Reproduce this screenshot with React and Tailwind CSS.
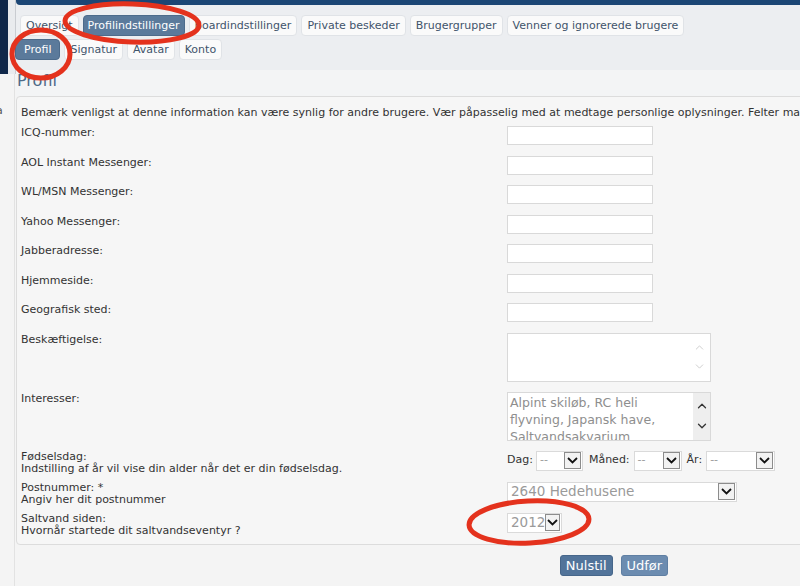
import React from "react";
import { ChevronUp, ChevronDown } from "lucide-react";

const tabs = ["Oversigt", "Profilindstillinger", "Boardindstillinger", "Private beskeder", "Brugergrupper", "Venner og ignorerede brugere"];
const subTabs = ["Profil", "Signatur", "Avatar", "Konto"];
const textRows = ["ICQ-nummer:", "AOL Instant Messenger:", "WL/MSN Messenger:", "Yahoo Messenger:", "Jabberadresse:", "Hjemmeside:", "Geografisk sted:"];

function Tab({ label, active, wide }) {
    return (
        <span
            className={`h-[21px] rounded-[4px] border leading-[19px] whitespace-nowrap ${
                active
                    ? `${wide ? "px-[8px]" : "px-[4px]"} bg-[#5b7a9b] border-[#4d6b8b] text-white`
                    : "px-[5px] bg-[#fafafa] border-[#e0e3e7] text-[#3f546b]"
            }`}
        >
            {label}
        </span>
    );
}

function Chevron() {
    return (
        <span className="w-[17px] h-[17px] mr-[1px] border border-[#8c8c8c] bg-[#f2f2f2] flex items-center justify-center">
            <svg width="11" height="7" viewBox="0 0 11 7">
                <polyline points="1,1 5.5,5.5 10,1" fill="none" stroke="#111" strokeWidth="1.8" />
            </svg>
        </span>
    );
}

function Select({ width, value, big }) {
    return (
        <div className={`${width} h-[20px] bg-white border border-[#dadada] flex items-center justify-between`}>
            <span className={`pl-[3px] text-[#9a9a9a] ${big ? "text-[13.5px]" : "text-[11px]"}`}>{value}</span>
            <Chevron />
        </div>
    );
}

function Row({ label, children, pad = "pb-[10.5px]" }) {
    return (
        <div className={`flex items-start ${pad}`}>
            <div className="w-[486px] shrink-0 leading-[13px]">{label}</div>
            <div>{children}</div>
        </div>
    );
}

// two line label rows (label + hint) are a fixed 31px high
function HintRow({ label, hint, children }) {
    return (
        <div className="flex items-start h-[31px]">
            <div className="w-[486px] shrink-0 leading-[12px]">
                {label}
                <br />
                {hint}
            </div>
            <div>{children}</div>
        </div>
    );
}

export default function App() {
    return (
        <div className="relative w-[800px] h-[586px] overflow-hidden bg-[#f4f4f4] font-['DejaVu_Sans',Verdana,sans-serif] text-[11px] text-[#333]">
            <div className="flex items-start w-[1400px]">
                {/* left edge of the site chrome */}
                <div className="w-[16px] h-[586px] shrink-0 flex flex-col">
                    <div className="flex h-[74px] shrink-0">
                        <div className="w-[8px] bg-[#10284a]" />
                        <div className="w-[7px] bg-[#e9ebee]" />
                        <div className="w-[1px] bg-[#c9ccd1]" />
                    </div>
                    <div className="flex-1 flex">
                        <div className="w-[14px] pt-[30px] text-[#555] overflow-hidden leading-[13px]">
                            <span className="-ml-[4px]">a</span>
                        </div>
                        <div className="w-[1px] bg-[#e2e2e2]" />
                    </div>
                </div>

                <div className="w-[1196px] shrink-0 flex flex-col">
                    <div className="h-[5px] shrink-0 bg-[#1b4675] rounded-bl-[4px]" />
                    <div className="shrink-0 bg-[#eceef1] pt-[10px] pb-[10px] pl-[1px] flex flex-col gap-[3px]">
                        <div className="flex gap-[4px] pl-[3px]">
                            {tabs.map((t) => (
                                <Tab key={t} label={t} active={t === "Profilindstillinger"} />
                            ))}
                        </div>
                        <div className="flex gap-[4px] -ml-[2px]">
                            {subTabs.map((t) => (
                                <Tab key={t} label={t} active={t === "Profil"} wide />
                            ))}
                        </div>
                    </div>
                    <div className="h-[26px] shrink-0 bg-[#f3f4f5] pl-[1px] pt-[2px]">
                        <span className="text-[16px] leading-[18px] text-[#4d6a88]">Profil</span>
                    </div>

                    <div className="shrink-0 border border-[#dcdcdc] rounded-l-[4px] bg-[#f6f6f6] pl-[4px] pt-[9px]">
                        <p className="leading-[13px] mb-[7px] whitespace-nowrap">
                            Bemærk venligst at denne information kan være synlig for andre brugere. Vær påpasselig med at medtage personlige oplysninger. Felter markeret med * skal udfyldes.
                        </p>

                        {textRows.map((l) => (
                            <Row key={l} label={l}>
                                <div className="w-[146px] h-[19px] bg-white border border-[#d9d9d9]" />
                            </Row>
                        ))}

                        <Row label="Beskæftigelse:" pad="pb-[10px]">
                            <div className="w-[204px] h-[49px] bg-white border border-[#d9d9d9] flex justify-end">
                                <div className="w-[16px] flex flex-col items-center justify-center gap-[6px] text-[#c4c4c4] mr-[3px]">
                                    <ChevronUp size={13} strokeWidth={1.5} />
                                    <ChevronDown size={13} strokeWidth={1.5} />
                                </div>
                            </div>
                        </Row>

                        <Row label="Interesser:" pad="pb-[10px]">
                            <div className="w-[204px] h-[49px] bg-white border border-[#d9d9d9] flex overflow-hidden">
                                <div className="flex-1 pl-[2px] pt-[1px] text-[12.5px] leading-[17px] text-[#8e8e8e]">
                                    Alpint skiløb, RC heli flyvning, Japansk have, Saltvandsakvarium
                                </div>
                                <div className="w-[17px] bg-[#eeeeee] flex flex-col items-center justify-center gap-[6px] text-[#333]">
                                    <ChevronUp size={14} strokeWidth={2.2} />
                                    <ChevronDown size={14} strokeWidth={2.2} />
                                </div>
                            </div>
                        </Row>

                        <HintRow label="Fødselsdag:" hint="Indstilling af år vil vise din alder når det er din fødselsdag.">
                            <div className="flex items-center h-[20px]">
                                <span className="mr-[3px]">Dag:</span>
                                <Select width="w-[47px]" value="--" />
                                <span className="ml-[6px] mr-[4px]">Måned:</span>
                                <Select width="w-[48px]" value="--" />
                                <span className="ml-[5px] mr-[4px]">År:</span>
                                <Select width="w-[69px]" value="--" />
                            </div>
                        </HintRow>

                        <HintRow label="Postnummer: *" hint="Angiv her dit postnummer">
                            <Select width="w-[230px]" value="2640 Hedehusene" big />
                        </HintRow>

                        <HintRow label="Saltvand siden:" hint="Hvornår startede dit saltvandseventyr ?">
                            <Select width="w-[55px]" value="2012" big />
                        </HintRow>
                    </div>

                    <div className="shrink-0 flex justify-center gap-[8px] pt-[10px]">
                        <span className="h-[21px] px-[5px] rounded-[3px] bg-[#52749a] border border-[#46668a] text-white text-[13px] leading-[19px]">Nulstil</span>
                        <span className="h-[21px] px-[5px] rounded-[3px] bg-[#6c8cb0] border border-[#5f7fa3] text-white text-[13px] leading-[19px]">Udfør</span>
                    </div>
                </div>
            </div>

            {/* red annotation circles drawn over the screenshot */}
            <svg className="absolute inset-0 pointer-events-none" width="800" height="586">
                <ellipse cx="132" cy="23" rx="67" ry="19" fill="none" stroke="#e4321d" strokeWidth="5" transform="rotate(2 132 23)" />
                <ellipse cx="41" cy="54" rx="29" ry="24" fill="none" stroke="#e4321d" strokeWidth="5" />
                <ellipse cx="529" cy="522" rx="60" ry="21" fill="none" stroke="#e4321d" strokeWidth="5" transform="rotate(-3 529 522)" />
            </svg>
        </div>
    );
}
